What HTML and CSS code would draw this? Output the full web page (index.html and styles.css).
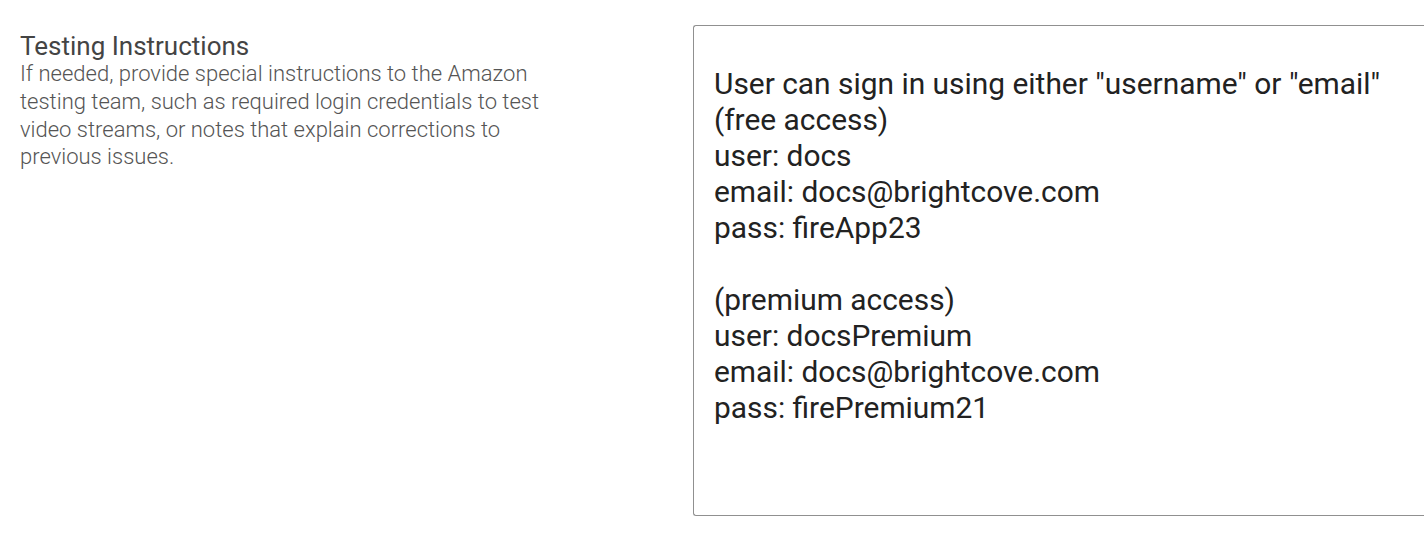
FILE: index.html
```html
<!DOCTYPE html>
<html>
<head>
<meta charset="utf-8">
<link rel="stylesheet" href="styles.css">
</head>
<body>
<div class="row">
  <div class="label-col">
    <div class="title">Testing Instructions</div>
    <div class="desc">If needed, provide special instructions to the Amazon testing team, such as required login credentials to test video streams, or notes that explain corrections to previous issues.</div>
  </div>
  <div class="field">
    <div class="field-text">User can sign in using either "username" or "email"
(free access)
user: docs
email: docs@brightcove.com
pass: fireApp23

(premium access)
user: docsPremium
email: docs@brightcove.com
pass: firePremium21</div>
  </div>
</div>
</body>
</html>
```
FILE: styles.css
```css
html, body {
  margin: 0;
  padding: 0;
  background: #fff;
  overflow: hidden;
}
.row {
  display: flex;
  align-items: flex-start;
  padding-top: 25px;
  font-family: Roboto, "Liberation Sans", sans-serif;
}
.label-col {
  width: 525px;
  padding-left: 20px;
  padding-top: 8px;
  flex: none;
}
.title {
  font-size: 26px;
  line-height: 27px;
  color: #444;
  font-weight: 400;
}
.desc {
  font-size: 22px;
  font-weight: 300;
  line-height: 27.8px;
  color: #555;
}
.field {
  margin-left: 148px;
  width: 760px;
  height: 491px;
  border: 1px solid #909090;
  border-right: none;
  border-radius: 3px 0 0 3px;
  padding: 40px 0 0 20px;
  box-sizing: border-box;
  flex: none;
}
.field-text {
  white-space: pre-wrap;
  font-size: 29.9px;
  line-height: 36px;
  color: #222;
}
```
